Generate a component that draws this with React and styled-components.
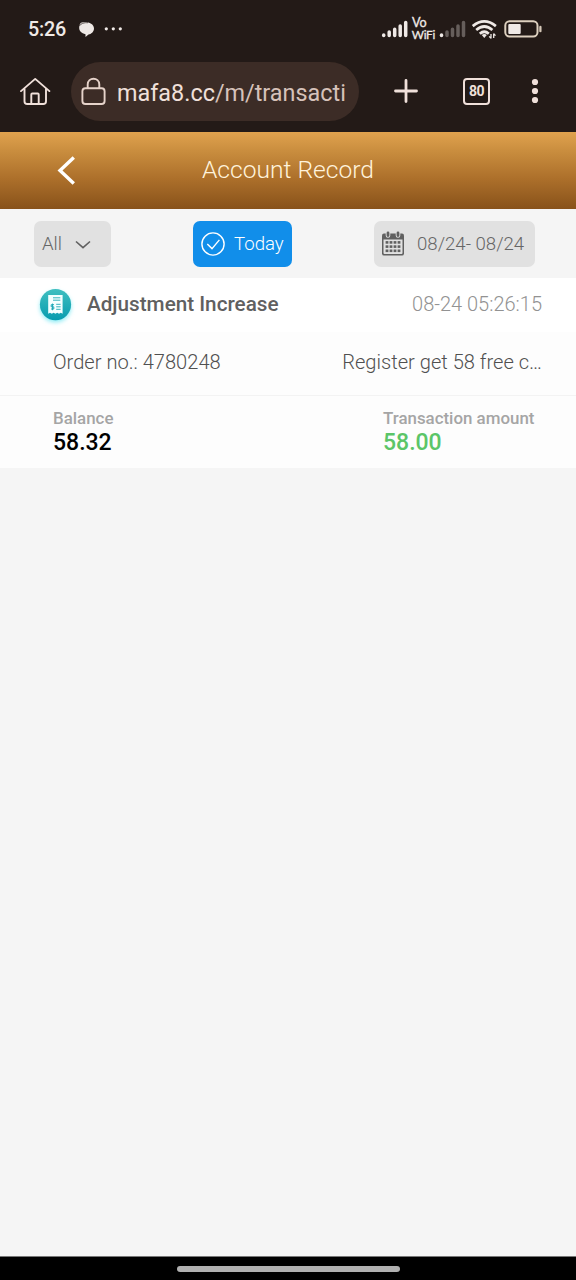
import React from 'react';
import styled, { createGlobalStyle } from 'styled-components';

const GlobalStyle = createGlobalStyle`
    * {
        box-sizing: border-box;
    }

    body {
        margin: 0;
        background: #f5f5f5;
        font-family: Roboto, "Liberation Sans", sans-serif;
    }

    svg {
        display: block;
        flex: none;
    }
`;

const StyledScreen = styled.div`
    display: flex;
    flex-direction: column;
    width: 576px;
    height: 1280px;
    overflow: hidden;
    background: #f5f5f5;
`;

const StyledChrome = styled.div`
    height: 132px;
    background: #231a17;
    color: #f0e0da;
`;

const StyledStatusBar = styled.div`
    display: flex;
    align-items: center;
    height: 58px;
    padding: 0 34px 0 28px;
`;

const StyledClock = styled.div`
    width: 48.5px;
    padding-top: 1px;
    font-size: 19.8px;
    font-weight: 500;
    letter-spacing: -0.2px;
    color: #efe9e6;
`;

const StyledStatusIcons = styled.div`
    margin-left: auto;
`;

const StyledAddressBar = styled.div`
    display: flex;
    align-items: center;
    height: 66px;
    padding: 0 31px 0 20px;
`;

const StyledAddress = styled.div`
    display: flex;
    align-items: center;
    width: 288px;
    height: 59px;
    margin: 0 34px 0 19.5px;
    padding-left: 10.5px;
    border-radius: 30px;
    background: #3c2c26;
`;

const StyledUrl = styled.div`
    margin-left: 11px;
    padding-top: 3px;
    font-size: 23.4px;
    line-height: 30px;
    white-space: nowrap;
    color: #d6c2ba;

    span {
        color: #f0e0da;
    }
`;

const StyledTabCount = styled.div`
    display: flex;
    align-items: center;
    justify-content: center;
    width: 27px;
    height: 27px;
    margin: 0 40px 0 44.5px;
    border: 2px solid #f0e0da;
    border-radius: 4px;
    font-size: 14px;
    font-weight: 700;
    letter-spacing: -0.6px;
`;

const StyledHeader = styled.div`
    display: grid;
    grid-template-columns: 96px 1fr 96px;
    align-items: center;
    height: 77px;
    background: linear-gradient(#e0a24e 0%, #c98d3e 25%, #ad702b 60%, #88521a 100%);

    svg {
        margin-left: 56px;
    }
`;

const StyledTitle = styled.h1`
    margin: 0;
    padding-bottom: 1px;
    font-size: 24.6px;
    font-weight: 300;
    line-height: 30px;
    text-align: center;
    color: #fff3dc;
`;

const StyledFilters = styled.div`
    display: flex;
    align-items: center;
    justify-content: space-between;
    height: 69px;
    padding: 0 41px 0 34px;
`;

const StyledFilter = styled.div`
    display: flex;
    align-items: center;
    gap: ${(props) => props.$gap}px;
    width: ${(props) => props.$width}px;
    height: 46px;
    padding-left: 8px;
    border-radius: 7px;
    background: ${(props) => (props.$active ? '#118eea' : '#e1e1e1')};
    color: ${(props) => (props.$active ? '#ffffff' : '#666666')};
    font-size: 18.6px;
    font-weight: 300;
    line-height: 24px;
    white-space: nowrap;
`;

const StyledRecord = styled.div`
    background: #fdfdfd;
`;

const StyledRecordHead = styled.div`
    display: flex;
    align-items: center;
    height: 54px;
    padding: 0 34px 0 35px;
    background: #ffffff;
`;

const StyledRecordType = styled.div`
    margin-left: 11px;
    padding-bottom: 2px;
    font-size: 20.7px;
    font-weight: 500;
    color: #606060;
`;

const StyledRecordTime = styled.div`
    margin-left: auto;
    padding-bottom: 3px;
    font-size: 20px;
    font-weight: 300;
    color: #929292;
`;

const StyledRecordDetail = styled.div`
    display: flex;
    align-items: center;
    justify-content: space-between;
    height: 64px;
    padding: 0 34px 4px 53px;
    border-bottom: 1px solid #f3f3f3;
    font-size: 20.1px;
    font-weight: 300;
    color: #505050;
`;

const StyledAmounts = styled.div`
    display: grid;
    grid-template-columns: 330px 1fr;
    height: 72px;
    padding: 12px 0 0 53px;
`;

const StyledAmountLabel = styled.div`
    font-size: 16.9px;
    font-weight: 500;
    line-height: 20px;
    color: #a5a5a5;
`;

const StyledAmountValue = styled.div`
    padding-top: 2px;
    font-size: 23px;
    font-weight: 500;
    line-height: 26px;
    color: ${(props) => props.$color};
`;

const StyledNavigation = styled.div`
    display: flex;
    justify-content: center;
    height: 24px;
    margin-top: auto;
    padding-top: 9px;
    border-top: 1px solid #777777;
    background: #000000;
`;

const StyledHandle = styled.div`
    width: 223px;
    height: 6px;
    border-radius: 3px;
    background: #b0b0b0;
`;

const NotificationIcons = () => (
    <svg width="46" height="20" viewBox="77 19 46 20" fill="#efe9e6">
        <path d="M81 22.8C85 20.6 94 22.3 94 28.5C94 32 91 34 88.5 34.6L85.5 37V34.2C81.5 33.5 78.8 30.8 79.2 27C79.4 25 80 23.8 81 22.8Z" />
        <path d="M79.2 26.2C80.8 23.4 84 22.4 88 22.7" fill="none" stroke="#231a17" strokeWidth="0.7" />
        <circle cx="106.3" cy="28.8" r="1.6" />
        <circle cx="113.3" cy="28.8" r="1.6" />
        <circle cx="120.3" cy="28.8" r="1.6" />
    </svg>
);

const Bars = ({ x, dim }) => (
    <g strokeWidth="3.5" strokeLinecap="round">
        <path d={`M${x} 35.5v-.4`} />
        <g stroke={dim ? '#665e5b' : undefined}>
            <path d={`M${x + 5.5} 35.5v-3.6M${x + 11} 35.5v-6.2M${x + 16.5} 35.5v-9.6M${x + 22} 35.5v-12.9`} />
        </g>
    </g>
);

const SystemIcons = () => (
    <svg width="162" height="30" viewBox="380 14 162 30" fill="none" stroke="#efe9e6">
        <Bars x={383.7} />
        <text fontFamily="Lato, sans-serif" fontSize="12.6" fill="#efe9e6" stroke="#efe9e6" strokeWidth="0.3">
            <tspan x="412" y="27.4">Vo</tspan>
            <tspan x="411.8" y="38.8" fontSize="11.8" letterSpacing="-0.3">WiFi</tspan>
        </text>
        <Bars x={441.5} dim />
        <g strokeWidth="2.7">
            <path d="M472.7 26.1Q484.3 16.6 495.9 26.1" />
            <path d="M476.2 30Q484.3 23 492.4 30" />
            <path d="M479.8 33.7Q484.3 29.8 488.8 33.7" />
        </g>
        <path d="M481.8 35Q484.3 33.2 486.8 35L484.3 38Z" fill="#efe9e6" stroke="none" />
        <path d="M491 34V38.5M493.7 33.5V38M491 38.4l-1.8-2M493.7 33.6l1.8 2" strokeWidth="1.3" />
        <rect x="505.3" y="21.2" width="32.2" height="15.4" rx="4.3" strokeWidth="2" stroke="#ddd0bf" />
        <rect x="508.3" y="24" width="12.4" height="10" rx="1" fill="#efe9e6" stroke="none" />
        <path d="M540.4 27v4.2" strokeWidth="2.3" strokeLinecap="round" stroke="#d5c8b8" />
    </svg>
);

const HomeIcon = () => (
    <svg width="31" height="30" viewBox="20 76 31 30" fill="none" stroke="#f0e0da" strokeWidth="1.9" strokeLinecap="round" strokeLinejoin="round">
        <path d="M21 91.1L35.2 78.9L49.4 91.1" />
        <path d="M24.5 89V101.2Q24.5 104 27.3 104H43.2Q46 104 46 101.2V89" />
        <path d="M31.3 104V94.5Q31.3 93.5 32.3 93.5H37.7Q38.7 93.5 38.7 94.5V104" />
    </svg>
);

const LockIcon = () => (
    <svg width="25" height="30" viewBox="81.5 76 25 30" fill="none" stroke="#e6d3ca" strokeWidth="1.9">
        <rect x="82.9" y="88.3" width="22.2" height="15.7" rx="3" />
        <path d="M88.2 88V84.5C88.2 76.8 99.8 76.8 99.8 84.5V88" />
    </svg>
);

const PlusIcon = () => (
    <svg width="26" height="26" viewBox="0 0 26 26" fill="none" stroke="#f0e0da" strokeWidth="2.8" strokeLinecap="round">
        <path d="M13 2.5V23.5M2.5 13H23.5" />
    </svg>
);

const MenuIcon = () => (
    <svg width="10" height="26" viewBox="0 0 10 26" fill="#f0e0da">
        <circle cx="5" cy="4" r="3.1" />
        <circle cx="5" cy="13" r="3.1" />
        <circle cx="5" cy="22" r="3.1" />
    </svg>
);

const BackIcon = () => (
    <svg width="20" height="30" viewBox="56 155.5 20 30" fill="none" stroke="#ffffff" strokeWidth="3.4">
        <path d="M73.8 157L60 170L73.8 183" />
    </svg>
);

const ChevronIcon = () => (
    <svg width="16" height="10" viewBox="0 0 16 10" fill="none" stroke="#606060" strokeWidth="1.6">
        <path d="M1 2.5L8 8.7L15 2.5" />
    </svg>
);

const CheckIcon = () => (
    <svg width="24" height="24" viewBox="0 0 24 24" fill="none" stroke="#ffffff" strokeWidth="1.4">
        <circle cx="12" cy="12" r="11.1" />
        <path d="M6.3 11.9L11 16.6L18.4 7.9" />
    </svg>
);

const CalendarIcon = () => {
    const columns = [5, 9, 13, 17];
    const rows = [10.8, 15, 19.2];

    return (
        <svg width="22" height="25" viewBox="0 0 22 25">
            <path d="M2 2.5H20Q22 2.5 22 4.5V22.5Q22 24.5 20 24.5H2Q0 24.5 0 22.5V4.5Q0 2.5 2 2.5Z" fill="#606060" />
            <path d="M1.5 8.5H20.5V22Q20.5 23 19.5 23H2.5Q1.5 23 1.5 22Z" fill="#e1e1e1" />
            <path d="M6 2.5V4.5M16 2.5V4.5" stroke="#e1e1e1" strokeWidth="4.6" strokeLinecap="round" />
            <path d="M6 2V4.5M16 2V4.5" stroke="#606060" strokeWidth="2.8" strokeLinecap="round" />
            {rows.map((y) => columns.map((x) => (
                <rect key={`${x}-${y}`} x={x - 1.4} y={y - 0.7} width="2.8" height="2.6" fill="#606060" />
            )))}
        </svg>
    );
};

const ReceiptIcon = () => (
    <svg width="41" height="46" viewBox="35 282 41 46">
        <defs>
            <linearGradient id="receipt" x1="0" y1="0" x2="0" y2="1">
                <stop offset="0" stopColor="#40bfc0" />
                <stop offset="1" stopColor="#079caf" />
            </linearGradient>
            <filter id="glow" x="-30%" y="-30%" width="160%" height="160%">
                <feGaussianBlur stdDeviation="2" />
            </filter>
        </defs>
        <circle cx="55.5" cy="306.8" r="15.6" fill="#8eecf5" filter="url(#glow)" />
        <circle cx="55.5" cy="304.6" r="15.6" fill="url(#receipt)" />
        <path d="M48.2 295H62.6V313.7L60.8 312.7L59 313.7L57.2 312.7L55.4 313.7L53.6 312.7L51.8 313.7L50 312.7L48.2 313.7Z" fill="#f4ffff" />
        <path d="M53 297.8H60.3M53 300.2H60.3M56.2 304.3H60.6M56.2 306.8H60.6M56.2 309.3H60.6" stroke="#35b2bc" strokeWidth="1" />
        <path d="M54 304.7H51.2V306.8H53.8V309H51M52.5 303.6V310.2" fill="none" stroke="#20a9b7" strokeWidth="1" />
    </svg>
);

const Amount = (props) => {
    const {
        label,
        value,
        color,
    } = props;

    return (
        <div>
            <StyledAmountLabel>{label}</StyledAmountLabel>
            <StyledAmountValue $color={color}>{value}</StyledAmountValue>
        </div>
    );
};

function App() {
    return (
        <>
            <GlobalStyle />
            <StyledScreen>
                <StyledChrome>
                    <StyledStatusBar>
                        <StyledClock>5:26</StyledClock>
                        <NotificationIcons />
                        <StyledStatusIcons>
                            <SystemIcons />
                        </StyledStatusIcons>
                    </StyledStatusBar>
                    <StyledAddressBar>
                        <HomeIcon />
                        <StyledAddress>
                            <LockIcon />
                            <StyledUrl><span>mafa8.cc</span>/m/transacti</StyledUrl>
                        </StyledAddress>
                        <PlusIcon />
                        <StyledTabCount>80</StyledTabCount>
                        <MenuIcon />
                    </StyledAddressBar>
                </StyledChrome>
                <StyledHeader>
                    <BackIcon />
                    <StyledTitle>Account Record</StyledTitle>
                </StyledHeader>
                <StyledFilters>
                    <StyledFilter $width={77} $gap={13}>
                        All
                        <ChevronIcon />
                    </StyledFilter>
                    <StyledFilter $width={99} $gap={9} $active>
                        <CheckIcon />
                        Today
                    </StyledFilter>
                    <StyledFilter $width={161} $gap={13}>
                        <CalendarIcon />
                        08/24- 08/24
                    </StyledFilter>
                </StyledFilters>
                <StyledRecord>
                    <StyledRecordHead>
                        <ReceiptIcon />
                        <StyledRecordType>Adjustment Increase</StyledRecordType>
                        <StyledRecordTime>08-24 05:26:15</StyledRecordTime>
                    </StyledRecordHead>
                    <StyledRecordDetail>
                        <span>Order no.: 4780248</span>
                        <span>Register get 58 free c…</span>
                    </StyledRecordDetail>
                    <StyledAmounts>
                        <Amount label="Balance" value="58.32" color="#000000" />
                        <Amount label="Transaction amount" value="58.00" color="#5bc568" />
                    </StyledAmounts>
                </StyledRecord>
                <StyledNavigation>
                    <StyledHandle />
                </StyledNavigation>
            </StyledScreen>
        </>
    );
}

export default App;
